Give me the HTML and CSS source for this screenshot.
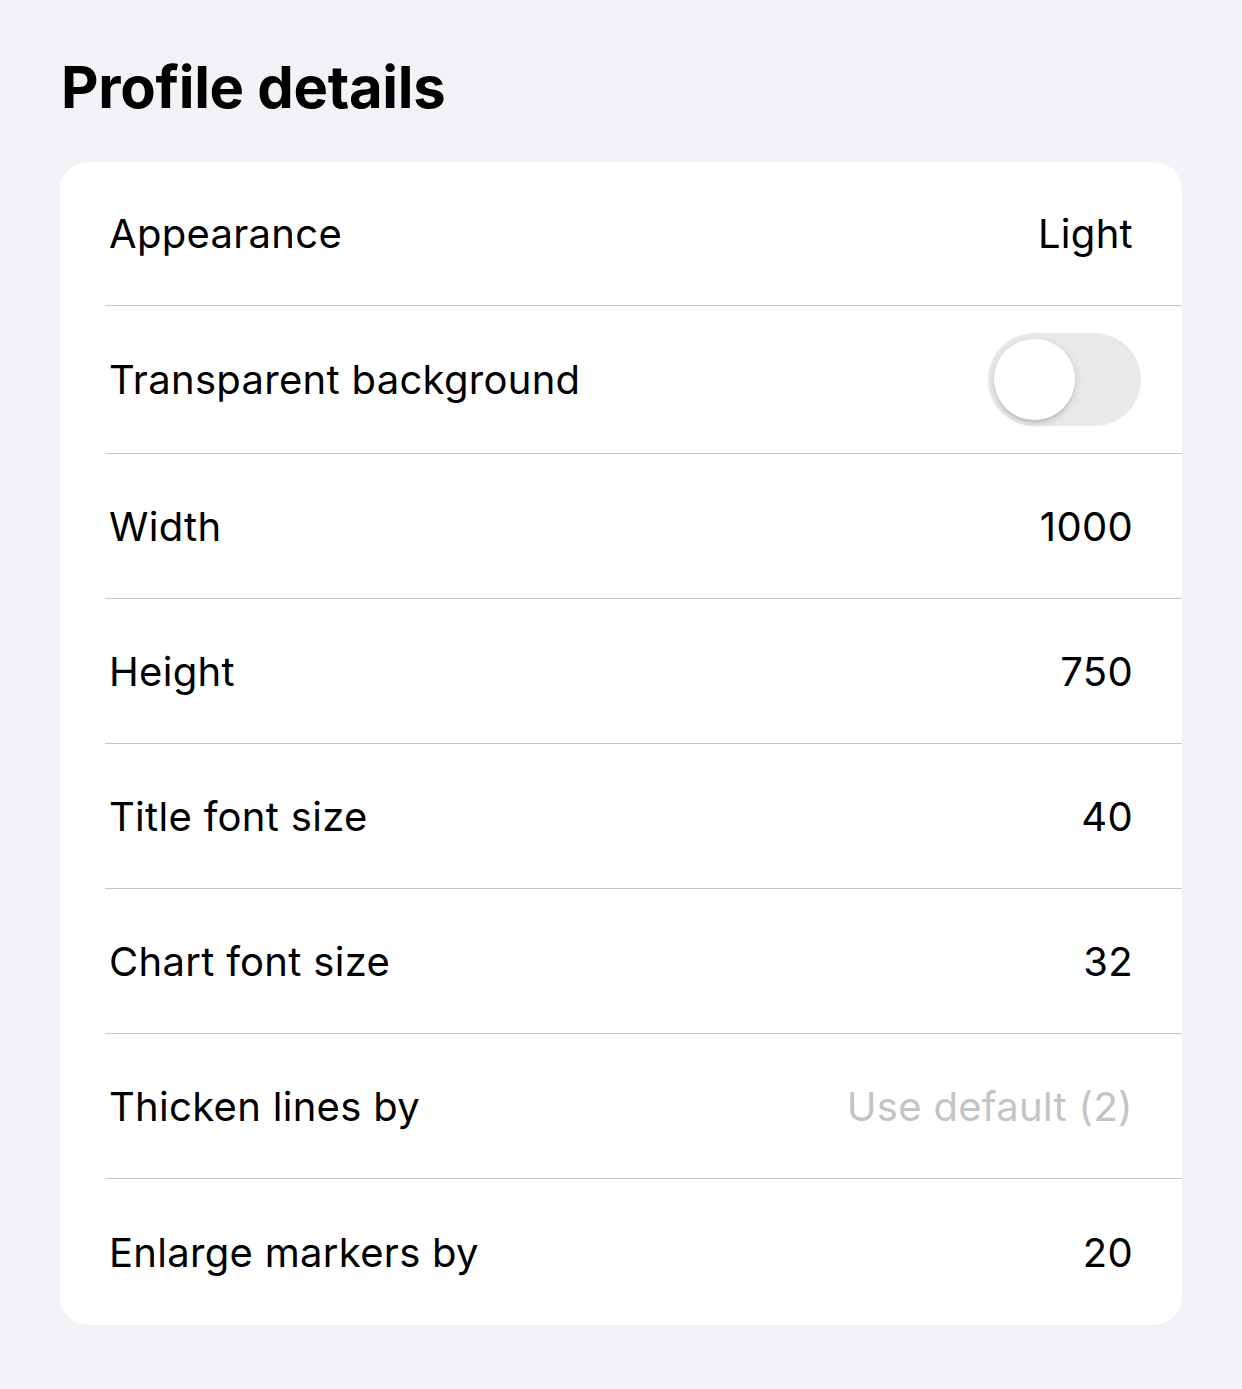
FILE: index.html
```html
<!DOCTYPE html>
<html>
<head>
<meta charset="utf-8">
<link rel="stylesheet" href="styles.css">
</head>
<body>
<main class="page">
  <h1 class="title">Profile details</h1>
  <section class="card">
    <div class="row first"><span class="label">Appearance</span><span class="value">Light</span></div>
    <div class="row row-toggle"><span class="label">Transparent background</span><span class="toggle"><span class="knob"></span></span></div>
    <div class="row"><span class="label">Width</span><span class="value">1000</span></div>
    <div class="row"><span class="label">Height</span><span class="value">750</span></div>
    <div class="row"><span class="label">Title font size</span><span class="value">40</span></div>
    <div class="row"><span class="label">Chart font size</span><span class="value">32</span></div>
    <div class="row"><span class="label">Thicken lines by</span><span class="value placeholder">Use default (2)</span></div>
    <div class="row last"><span class="label">Enlarge markers by</span><span class="value">20</span></div>
  </section>
</main>
</body>
</html>
```
FILE: styles.css
```css
* { box-sizing: border-box; }
html, body { margin: 0; padding: 0; }
body {
  background: #f2f2f7;
  font-family: Inter, "Open Sans", "Liberation Sans", sans-serif;
  color: #000;
  width: 1242px;
  height: 1389px;
}
.page {
  padding: 51px 60px 0 60px;
}
.title {
  margin: 0;
  font-size: 58px;
  font-weight: 700;
  line-height: 72px;
  letter-spacing: -0.3px;
  padding-left: 1px;
}
.card {
  margin-top: 39px;
  background: #fff;
  border-radius: 28px;
  overflow: hidden;
}
.row {
  display: flex;
  align-items: center;
  justify-content: space-between;
  height: 145px;
  margin-left: 45px;
  padding: 0 49px 0 4px;
  border-bottom: 1px solid #c6c6c8;
  font-size: 40px;
  letter-spacing: 0.3px;
}
.row.first { height: 144px; }
.row-toggle { height: 148px; }
.row.last { border-bottom: none; height: 146px; }
.label { color: #000; }
.value { color: #000; }
.placeholder { color: #c4c4c6; }
.toggle {
  position: relative;
  width: 153px;
  height: 93px;
  border-radius: 47px;
  background: #e9e9ea;
  margin-right: -8px;
}
.knob {
  position: absolute;
  left: 6px;
  top: 6px;
  width: 81px;
  height: 81px;
  border-radius: 50%;
  background: #fff;
  box-shadow: 0 3px 8px rgba(0,0,0,0.15), 0 3px 1px rgba(0,0,0,0.06);
}
```
